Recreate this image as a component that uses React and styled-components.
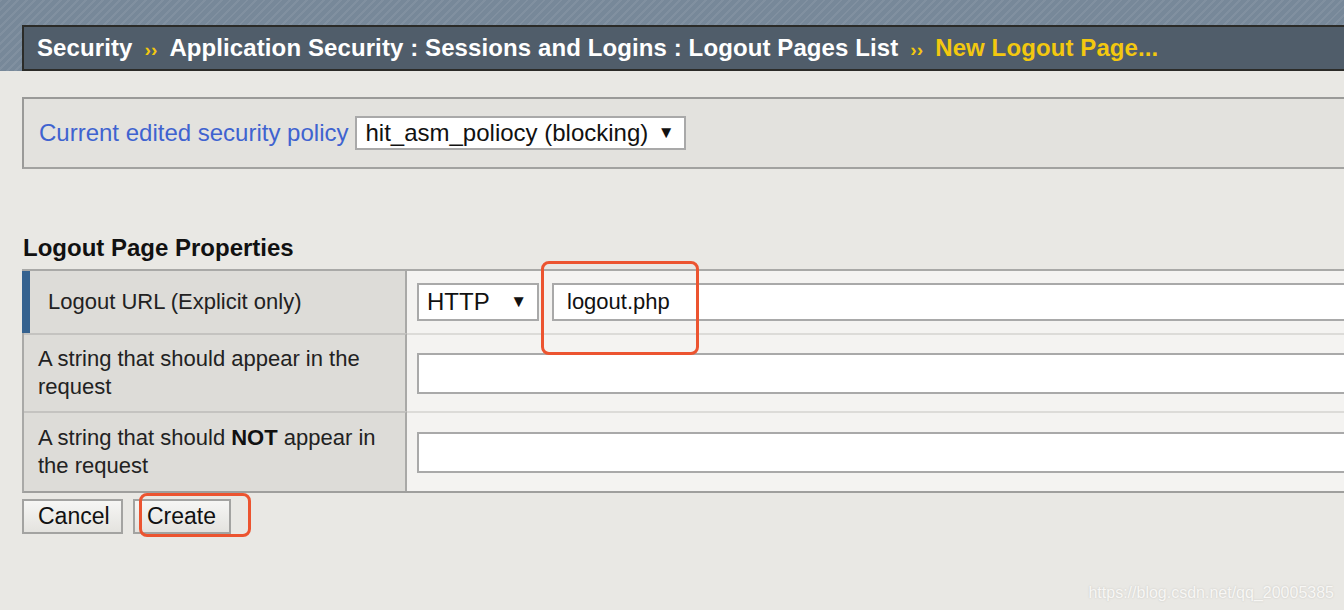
import styled, { createGlobalStyle } from "styled-components"

const GlobalStyle = createGlobalStyle`
  html, body {
    margin: 0;
    padding: 0;
    background: #e9e8e4;
    font-family: "Liberation Sans", Arial, sans-serif;
  }
  * { box-sizing: border-box; }
`;

const Page = styled.div`
  position: relative;
  width: 1344px;
  height: 610px;
  overflow: hidden;
  background: #e9e8e4;
`;

const Header = styled.div`
  padding: 25px 0 0 22px;
  background-color: #778899;
  background-image: repeating-linear-gradient(
    135deg,
    rgba(255, 255, 255, 0.07) 0 2px,
    rgba(0, 0, 0, 0) 2px 6px
  );
`;

const Crumbs = styled.div`
  height: 46px;
  background: #505d6a;
  border-top: 2px solid #2b2b28;
  border-bottom: 2px solid #2b2b28;
  border-left: 2px solid #2b2b28;
  display: flex;
  align-items: center;
  padding-left: 13px;
  font-weight: bold;
  font-size: 24px;
  letter-spacing: 0.1px;
  color: #ffffff;
  white-space: nowrap;
`;

const Crumb = styled.span`
  color: ${(p) => (p.current ? "#f3c80f" : "#ffffff")};
`;

const Sep = styled.span`
  color: #f3c80f;
  font-size: 19px;
  margin: 3px 12px 0 12px;
`;

const Content = styled.div`
  padding: 26px 0 0 22px;
`;

const PolicyBox = styled.div`
  height: 72px;
  background: #e3e2de;
  border-top: 2px solid #9a9a98;
  border-left: 2px solid #9a9a98;
  border-bottom: 2px solid #a2a2a0;
  display: flex;
  align-items: center;
  padding-left: 15px;
  gap: 7px;
`;

const PolicyLabel = styled.span`
  color: #3f63d0;
  font-size: 24px;
`;

const Select = styled.div`
  height: ${(p) => p.h}px;
  width: ${(p) => p.w}px;
  background: #ffffff;
  border: 2px solid #a9a9a9;
  display: flex;
  align-items: center;
  justify-content: space-between;
  padding: 0 10px 0 8px;
  font-size: 24px;
  color: #111;
`;

const Arrow = styled.span`
  font-size: 17px;
  color: #111;
`;

const Heading = styled.div`
  margin-top: 66px;
  font-weight: bold;
  font-size: 24px;
  color: #111;
  padding-left: 1px;
  height: 34px;
  line-height: 26px;
`;

const Table = styled.div`
  display: grid;
  grid-template-columns: 383px 1fr;
  border-top: 2px solid #a9a9a7;
  border-bottom: 2px solid #9f9f9d;
  border-left: 2px solid #a9a9a7;
`;

const Label = styled.div`
  height: ${(p) => p.h}px;
  background: #dddcd8;
  border-right: 2px solid #a9a9a7;
  border-top: ${(p) => (p.first ? "none" : "2px solid #c4c3c0")};
  border-left: ${(p) => (p.marked ? "8px solid #35628f" : "none")};
  margin-left: ${(p) => (p.marked ? "-2px" : "0")};
  display: flex;
  align-items: center;
  padding: 0 12px 0 ${(p) => (p.marked ? "18px" : "14px")};
  font-size: 22px;
  line-height: 28px;
  color: #222;
`;

const LabelText = styled.p`
  margin: 0;
`;

const Strong = styled.strong`
  font-weight: bold;
  color: #111;
`;

const Value = styled.div`
  position: relative;
  height: ${(p) => p.h}px;
  background: #f4f3f1;
  border-top: ${(p) => (p.first ? "none" : "2px solid #dcdbd8")};
  display: flex;
  align-items: center;
  padding-left: 10px;
  gap: 13px;
`;

const Input = styled.div`
  flex: 1;
  height: ${(p) => p.h}px;
  background: #ffffff;
  border: 2px solid #a9a9a9;
  border-right: none;
  display: flex;
  align-items: center;
  padding-left: 13px;
  font-size: 22px;
  color: #111;
`;

const Mark = styled.div`
  position: absolute;
  z-index: 2;
  left: ${(p) => p.l}px;
  top: ${(p) => p.t}px;
  width: ${(p) => p.w}px;
  height: ${(p) => p.h}px;
  border: 3px solid #ec5430;
  border-radius: 8px;
  pointer-events: none;
`;

const Buttons = styled.div`
  position: relative;
  display: flex;
  gap: 10px;
  margin-top: 6px;
`;

const Button = styled.button`
  height: 35px;
  width: ${(p) => p.w}px;
  background: linear-gradient(#f6f6f4, #e4e3df);
  border: 2px solid #a3a3a1;
  font-family: "Liberation Sans", Arial, sans-serif;
  font-size: 23px;
  color: #111;
  padding: 0 0 0 ${(p) => p.pl}px;
  text-align: left;
`;

const Watermark = styled.div`
  position: absolute;
  right: 10px;
  bottom: 8px;
  font-size: 16px;
  color: #f8f7f5;
  text-shadow: 0 0 2px #c4c3bf;
`;

export default function App() {
  return (
    <Page>
      <GlobalStyle />
      <Header>
        <Crumbs>
          <Crumb>Security</Crumb>
          <Sep>››</Sep>
          <Crumb>Application Security : Sessions and Logins : Logout Pages List</Crumb>
          <Sep>››</Sep>
          <Crumb current>New Logout Page...</Crumb>
        </Crumbs>
      </Header>
      <Content>
        <PolicyBox>
          <PolicyLabel>Current edited security policy</PolicyLabel>
          <Select w={331} h={34}>
            <span>hit_asm_poliocy (blocking)</span>
            <Arrow>▼</Arrow>
          </Select>
        </PolicyBox>
        <Heading>Logout Page Properties</Heading>
        <Table>
          <Label h={62} first marked>Logout URL (Explicit only)</Label>
          <Value h={62} first>
            <Select w={122} h={38}>
              <span>HTTP</span>
              <Arrow>▼</Arrow>
            </Select>
            <Input h={38}>logout.php</Input>
            <Mark l={134} t={-10} w={158} h={94} />
          </Value>
          <Label h={78}>A string that should appear in the request</Label>
          <Value h={78}>
            <Input h={41} />
          </Value>
          <Label h={80}>
            <LabelText>A string that should <Strong>NOT</Strong> appear in the request</LabelText>
          </Label>
          <Value h={80}>
            <Input h={41} />
          </Value>
        </Table>
        <Buttons>
          <Button w={101} pl={14}>Cancel</Button>
          <Button w={98} pl={12}>Create</Button>
          <Mark l={117} t={-6} w={112} h={44} />
        </Buttons>
      </Content>
      <Watermark>https://blog.csdn.net/qq_20005385</Watermark>
    </Page>
  )
}
